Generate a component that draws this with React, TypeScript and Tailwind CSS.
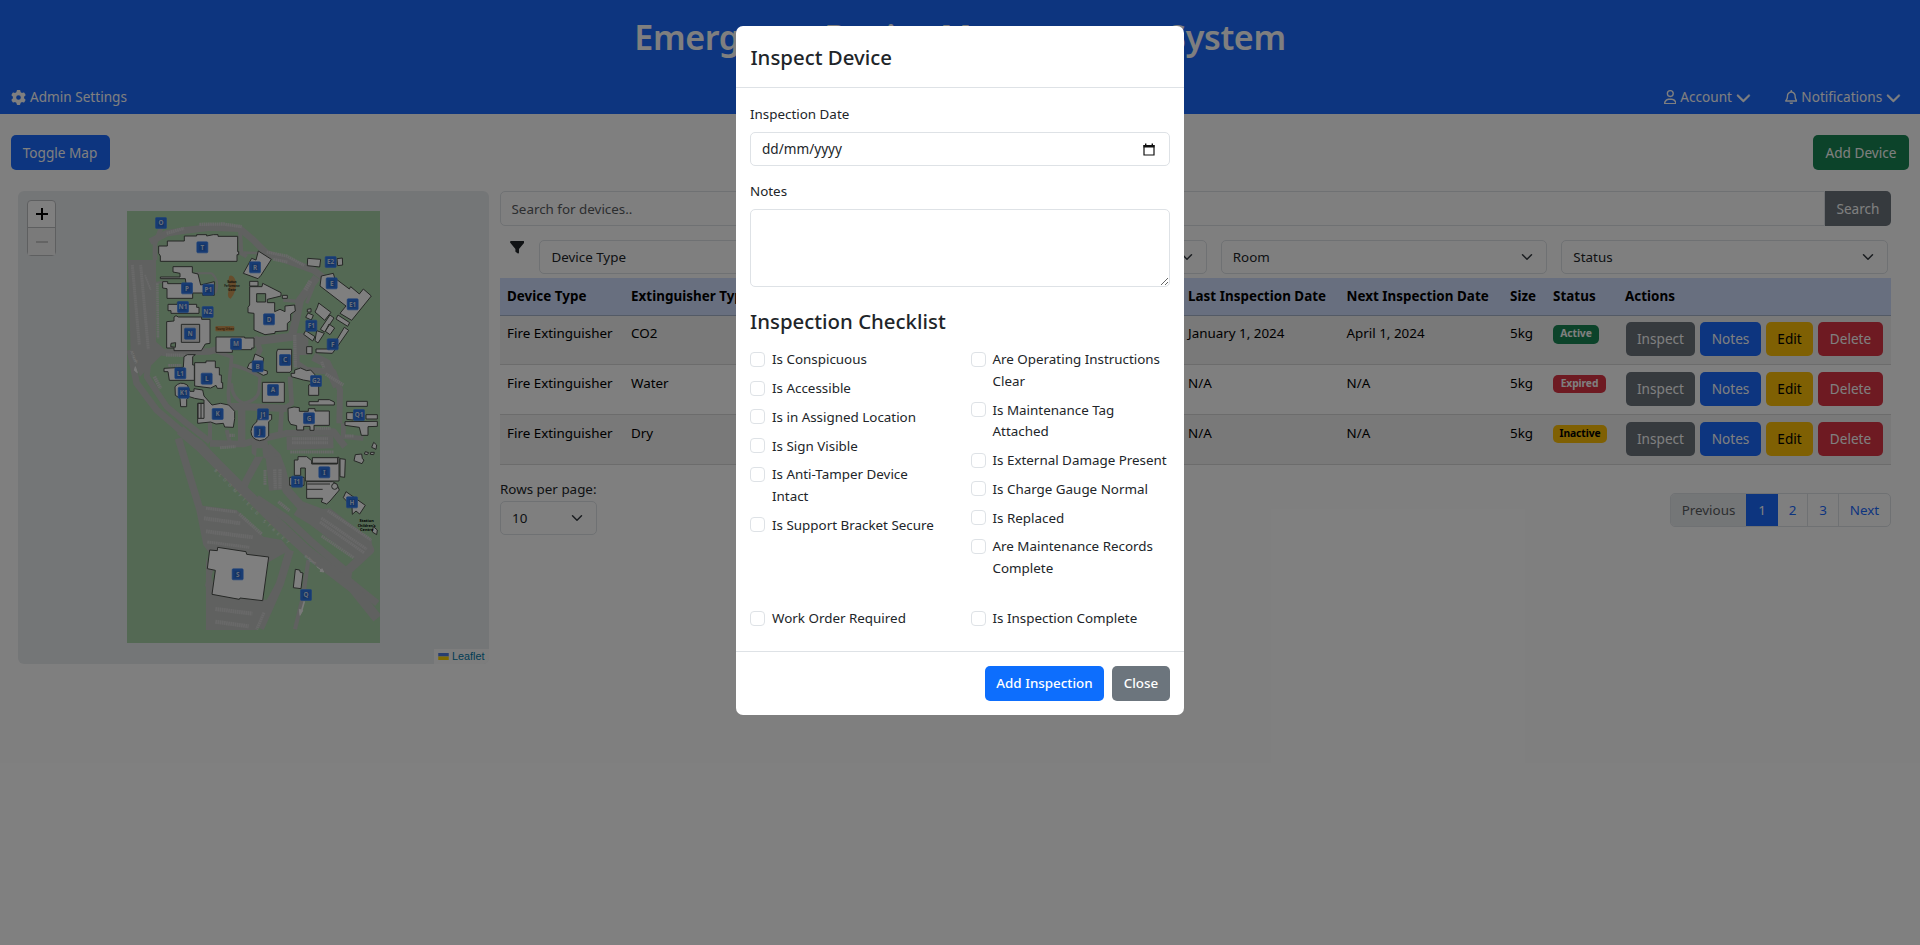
import type { ReactNode } from "react";
import { FaChevronDown, FaFilter, FaGear, FaRegBell, FaRegUser } from "react-icons/fa6";

const FONT = "font-['Noto_Sans',sans-serif]";

const MARKERS: [string, number, number][] = [
  ["O", 183, 99], ["T", 307, 172], ["R", 465, 232], ["E2", 692, 216], ["E", 695, 280],
  ["P", 261, 295], ["P1", 325, 299], ["E1", 758, 343], ["N1", 249, 351], ["N2", 323, 366],
  ["D", 507, 388], ["F1", 634, 407], ["N", 270, 431], ["M", 408, 462], ["F", 698, 463],
  ["C", 555, 510], ["B", 473, 529], ["L1", 241, 550], ["L", 320, 566], ["G2", 648, 573],
  ["A", 519, 600], ["K1", 251, 608], ["K", 353, 672], ["J1", 489, 673], ["G", 627, 685],
  ["Q1", 777, 675], ["J", 479, 725], ["I", 673, 847], ["I1", 591, 875], ["H", 756, 937],
  ["S", 413, 1153], ["Q", 618, 1215],
];

const ROADS: [string, number][] = [
  ["M150 155 L200 130 L250 122 L330 112 L420 116 L460 150 L500 190 L570 215 L640 240 L670 262", 20],
  ["M183 115 L165 160 L165 210", 14],
  ["M158 210 L158 460 L190 488 L330 484 L350 478", 20],
  ["M420 120 L424 190 L440 200", 12],
  ["M430 188 L500 190", 8],
  ["M335 250 Q362 275 345 310 M335 250 L285 250", 6],
  ["M200 275 L150 280 M215 265 L180 265", 6],
  ["M345 484 L395 500 L385 610 L388 650", 11],
  ["M395 525 Q440 535 480 560 L478 590 Q480 630 430 640 Q395 625 394 580", 10],
  ["M465 440 L480 480 L470 500", 16],
  ["M460 455 L540 445 L575 440 L590 380 L600 330 L650 262", 24],
  ["M550 330 L600 335 M640 290 L620 340", 10],
  ["M588 430 L590 520 L620 540 L700 545 L720 600 L718 700", 18],
  ["M640 500 L680 520 L712 590", 26],
  ["M570 560 L575 640 L545 660 L540 740", 14],
  ["M425 640 L425 760 M388 650 L425 650 L560 655", 22],
  ["M330 760 L430 762 L470 750 L560 730 L700 725 L735 770", 20],
  ["M560 760 L700 755", 40],
  ["M480 760 L478 800 L440 870 L425 905", 22],
  ["M500 770 L530 800 L545 840 L560 900 L600 945 L680 975 L740 1010 L810 1080 L745 1140", 26],
  ["M478 780 L520 800", 30],
  ["M520 800 L530 900", 46],
  ["M90 480 L110 580 L170 660 L240 720 L300 760 L400 870 L500 960 L620 1075 L720 1150 L832 1240", 20],
  ["M150 470 L140 560 L200 650 L260 700 L330 755", 18],
  ["M240 720 L300 770 L420 890 L520 990 L650 1110 L760 1195 L832 1285", 30],
  ["M235 745 L300 960 L320 1060 L335 1080", 22],
  ["M470 925 L560 985 L640 1060 L745 1150 L740 1180", 22],
  ["M570 1080 L540 1180 L480 1315", 24],
  ["M625 1110 L610 1215 L585 1318", 12],
  ["M590 960 L640 990 L760 1080 L815 1060", 34],
  ["M730 700 L730 740 L790 745", 14],
  ["M205 690 L240 725", 14],
  ["M330 690 L330 755 M380 720 L390 760 M320 1190 L350 1080", 12],
];

const PAVED = [
  "M84 210 L150 210 L165 470 L190 490 L120 560 L92 490 Z",
  "M290 945 L410 960 L490 1040 L545 1050 L570 1080 L500 1120 L330 1100 Z",
  "M318 1100 L345 1200 L500 1230 L545 1150 L470 1320 L318 1320 Z",
  "M640 960 L690 955 L815 1050 L815 1085 L770 1110 L640 1010 Z",
  "M455 740 Q478 720 500 745 L510 790 Q480 815 455 790 Z",
  "M590 430 L625 430 L625 495 L590 495 Z",
];

const BUILDINGS = [
  "M202 153 L253 153 L253 138 L290 138 L290 134 L320 134 L320 138 L340 134 L354 134 L354 139 L413 139 L413 185 L416 185 L416 194 L411 194 L411 214 L181 214 L181 198 L176 190 L176 168 L202 168 Z",
  "M475 183 L514 208 L483 256 L474 266 L430 250 L455 205 L468 210 Z",
  "M623 205 L662 208 L659 231 L622 227 Z M711 206 L727 204 L728 225 L713 227 Z",
  "M219 230 L277 230 L277 248 L294 252 L302 285 L343 275 L343 316 L308 316 L308 309 L278 309 L278 325 L201 325 L201 296 L188 294 L188 275 L203 275 L203 281 L258 281 L256 266 L181 266 L181 261 L240 261 L240 250 L219 246 Z",
  "M204 343 L232 343 L232 337 L262 337 L262 343 L290 343 L290 352 L297 352 L297 370 L213 370 L213 362 L204 362 Z",
  "M200 395 L222 393 L222 381 L228 377 L235 381 L305 381 L305 388 L330 388 L330 460 L316 462 L304 482 L222 482 L222 474 L200 474 Z",
  "M449 290 L486 290 L488 280 L543 308 L543 318 L502 328 L502 338 L524 338 L524 365 L540 358 L555 365 L555 348 L584 345 L586 363 L572 372 L572 392 L562 400 L562 422 L525 425 L525 430 L495 434 L462 420 L462 370 L444 368 L444 352 L449 345 Z",
  "M449 274 L474 274 L474 288 L449 288 Z M547 316 L562 316 L562 325 L547 325 Z",
  "M664 258 L700 250 L704 264 L748 297 L752 290 L778 312 L790 297 L814 318 L755 391 L720 370 L738 348 L660 288 Z",
  "M656 339 L693 367 L674 391 L645 366 L652 352 Z M690 375 L702 384 L674 426 L661 418 Z M687 402 L704 414 L690 434 L676 424 Z M650 422 L673 430 L654 459 L645 452 Z M617 422 L645 440 L638 453 L611 433 Z M624 369 L640 376 L634 390 L617 382 Z",
  "M714 375 L749 398 L743 409 L708 387 Z M733 412 L746 421 L712 470 L697 490 L648 488 L648 477 L690 477 L710 450 Z M620 470 L636 470 L636 491 L620 491 Z M622 358 L633 356 L633 366 L622 366 Z",
  "M348 441 L434 441 L434 444 L462 444 L462 474 L455 474 L455 479 L397 479 L397 487 L348 487 Z",
  "M533 478 L575 478 L575 541 L570 547 L530 547 L530 486 Z",
  "M465 492 L491 504 L488 520 L484 538 L502 543 L502 552 L490 556 L470 545 L442 534 L448 520 L458 515 Z",
  "M192 535 L250 532 L252 500 L262 494 L286 494 L278 500 L278 525 L283 525 L283 571 L208 571 L204 545 L192 545 Z",
  "M284 518 L318 518 L318 513 L346 513 L346 533 L358 533 L358 555 L364 555 L364 578 L368 578 L368 595 L352 595 L348 586 L332 594 L284 588 Z",
  "M225 590 Q240 572 262 585 L270 604 L282 604 L282 596 L308 600 L312 618 L336 645 L362 640 L386 645 L404 664 L404 686 L400 712 L374 711 L370 700 L348 702 L332 696 L293 700 L293 640 L312 640 L312 630 L284 625 L268 620 L260 628 L260 650 L242 650 L240 625 L226 616 Z",
  "M487 577 L553 577 L553 637 L487 637 Z",
  "M573 550 L584 550 L584 540 L602 534 L620 542 L632 540 L644 553 L650 585 L656 588 L656 616 L626 616 L626 585 L640 580 L632 574 L610 570 L574 560 Z",
  "M627 635 L655 635 L655 629 L688 629 L703 636 L703 645 L627 645 Z",
  "M564 655 L582 651 L598 653 L598 664 L625 664 L625 656 L645 656 L645 663 L688 663 L688 706 L642 706 L642 721 L630 721 L630 709 L611 709 L611 720 L590 720 L590 707 L572 703 L565 690 Z",
  "M475 674 L515 674 L515 688 L506 695 L506 738 Q495 752 479 752 Q454 748 453 725 Q455 705 470 696 Z",
  "M740 634 L802 634 L802 649 L740 649 Z M740 668 L760 668 L760 690 L740 688 Z M798 674 L832 674 L832 687 L798 687 Z M735 695 L832 694 L832 709 L804 710 L804 736 L784 736 L778 712 L735 706 Z",
  "M766 794 L785 792 L787 806 L792 810 L786 821 L762 812 Z M821 757 L830 765 L828 778 L815 772 Z M796 785 L806 788 L802 794 L793 792 Z M812 787 L823 787 L821 794 L811 793 Z",
  "M583 810 L594 810 L594 800 L620 800 L635 812 L635 822 L712 822 L712 802 L717 802 L717 873 L616 873 L616 834 L602 834 L602 856 L583 856 Z",
  "M637 803 L713 803 L713 820 L637 820 Z M720 806 L736 808 L734 862 L720 860 Z M569 862 L612 862 L612 886 L569 886 Z",
  "M620 875 L698 875 L710 882 L718 900 L690 933 L680 942 L664 936 L668 925 L620 925 Z",
  "M738 905 L796 946 L779 972 L768 963 L757 973 L756 950 L730 923 Z M820 1010 L832 1020 L830 1034 L817 1026 Z",
  "M353 1072 L438 1085 L440 1093 L506 1101 L488 1232 L420 1224 L418 1228 L336 1213 L346 1141 L322 1136 L329 1080 L352 1082 Z",
  "M586 1138 L599 1140 L601 1147 L609 1149 L603 1196 L580 1193 Z",
];

const STALLS: [string, number][] = [
  ["M298 103 L370 102 L425 110", 10], ["M200 130 L252 115", 10], ["M500 186 L560 198 L612 226", 9],
  ["M520 208 L562 216", 9], ["M97 225 L118 465", 9], ["M122 225 L145 478", 9], ["M172 280 L174 445", 8],
  ["M135 255 L152 300", 5], ["M616 300 L632 272", 13], ["M584 435 L586 535", 10], ["M198 495 L255 496", 10],
  ["M205 526 L245 526", 8], ["M163 560 L182 596", 11], ["M677 552 L730 585", 10], ["M576 746 L684 746", 9],
  ["M576 758 L684 758", 9], ["M571 786 L702 786", 9], ["M360 773 L407 770", 9], ["M495 840 L495 885", 9],
  ["M524 838 L526 898", 10], ["M540 838 L540 898", 10], ["M535 935 L568 962", 10], ["M632 715 L692 715", 8],
  ["M735 738 L762 738", 9], ["M683 962 L814 1050", 9], ["M664 984 L800 1078", 9], ["M660 996 L792 1088", 9],
  ["M665 1038 L762 1104", 9], ["M318 955 L410 966", 9], ["M312 985 L422 1000", 12], ["M318 1024 L458 1042", 12],
  ["M322 1056 L448 1072", 9], ["M418 972 L486 1033", 10], ["M346 1257 L457 1271", 12], ["M346 1295 L446 1309", 12],
  ["M492 1268 L470 1318", 9], ["M388 736 L404 736", 10], ["M665 515 L672 535", 9],
];

function CampusMap() {
  return (
    <svg viewBox="81 63 759 1296" preserveAspectRatio="none" className="block h-[432px] w-[253px]">
      <rect x="81" y="63" width="759" height="1296" fill="#a8d2a8" />
      <g fill="none" stroke="#c0c2c0" strokeLinejoin="round">
        {ROADS.map(([d, w]) => <path key={d} d={d} strokeWidth={w} />)}
      </g>
      <g fill="#c0c2c0">
        {PAVED.map((d) => <path key={d} d={d} />)}
      </g>
      <path d="M470 775 L487 775 L490 800 L468 800 Z" fill="#a8d2a8" />
      <g fill="none" stroke="#d2d2d2" strokeDasharray="5 1.5">
        {STALLS.map(([d, w]) => <path key={d} d={d} strokeWidth={w} />)}
      </g>
      <g fill="#ffffff" stroke="#4c504c" strokeWidth="3">
        {BUILDINGS.map((d) => <path key={d} d={d} />)}
      </g>
      <g stroke="#4c504c" strokeWidth="3">
        <path d="M244 403 H299 V457 H244 Z" fill="#e4e4e4" />
        <path d="M213 460 L227 458 L226 472 L212 470 Z" fill="#a8d2a8" />
        <path d="M470 311 L497 311 L497 336 L470 336 Z" fill="#a8d2a8" />
        <path d="M294 640 H312 V685 H294 Z M303 640 V685 M620 898 H668 M622 882 L690 882 M637 820 H713" fill="none" />
        <circle cx="704" cy="889" r="9" fill="#ffffff" />
      </g>
      <path d="M388 258 Q400 252 408 275 Q410 305 392 326 Q382 325 384 310 Q390 290 384 275 Z" fill="#cf9a58" />
      <rect x="346" y="408" width="57" height="16" rx="4" fill="#cf9a58" />
      <g fill="#2b2b20" fontSize="10" fontWeight="700" textAnchor="middle" className={FONT}>
        <text x="396" y="280" textLength="28">Sutton</text>
        <text x="396" y="292" textLength="46" lengthAdjust="spacingAndGlyphs">Performance</text>
        <text x="396" y="304">Gate</text>
        <text x="375" y="419" textLength="54" lengthAdjust="spacingAndGlyphs" fill="#6b3d10">Young Urban</text>
        <text x="800" y="997" fill="#000" fontSize="12">Station</text>
        <text x="800" y="1010" fill="#000" fontSize="12" textLength="54" lengthAdjust="spacingAndGlyphs">Children's</text>
        <text x="800" y="1023" fill="#000" fontSize="12">Centre</text>
      </g>
      <g fill="#eeeeee" fontSize="12" className={FONT}>
        <text transform="translate(342 842) rotate(46)" textLength="185">BLOOMFIELD</text>
        <text transform="translate(488 995) rotate(42)" textLength="100">STREET</text>
        <text transform="translate(90 485) rotate(66)" textLength="40">A1 North</text>
        <text transform="translate(613 1100) rotate(38)" textLength="40">to Airport</text>
      </g>
      <g fill="#f4f4f4" stroke="#f4f4f4" strokeWidth="3">
        <path d="M106 530 L112 548 L103 541 Z M650 1130 L665 1141" />
        <path d="M671 1146 L660 1144 L666 1136 Z" />
        <path d="M613 1234 L605 1262" strokeWidth="5" />
        <path d="M600 1276 L598 1258 L608 1262 Z" />
      </g>
      {MARKERS.map(([label, x, y]) => (
        <g key={label}>
          <rect x={x - 16.5} y={y - 16.5} width="33" height="33" rx="3" fill="#2f76e6" stroke="#3f86f2" strokeWidth="2" />
          <rect x={x - 9} y={y - 9} width="18" height="19" fill="#2a68c8" />
          <text x={x} y={y + 7} fontSize="19" fontWeight="700" fill="#cfdcf2" textAnchor="middle" className={FONT}>
            {label}
          </text>
        </g>
      ))}
    </svg>
  );
}

function Chevron() {
  return (
    <svg viewBox="0 0 16 16" className="h-[12px] w-[14px] shrink-0">
      <path d="m2 5 6 6 6-6" fill="none" stroke="#343a40" strokeWidth="2" strokeLinecap="round" strokeLinejoin="round" />
    </svg>
  );
}

function Select({ children, className = "" }: { children?: ReactNode; className?: string }) {
  return (
    <div className={`flex items-center justify-between rounded-[5px] border border-[#dee2e6] bg-white pl-[11px] pr-[12px] ${className}`}>
      <span className="pt-px">{children}</span>
      <Chevron />
    </div>
  );
}

const HEADERS: [string, string][] = [
  ["Device Type", "w-[124px]"],
  ["Extinguisher Type", "w-[557px]"],
  ["Last Inspection Date", "w-[158.5px]"],
  ["Next Inspection Date", "w-[163.5px]"],
  ["Size", "w-[43px]"],
  ["Status", "w-[72px]"],
  ["Actions", "w-[273px]"],
];

const ROWS = [
  { type: "CO2", last: "January 1, 2024", next: "April 1, 2024", status: "Active", badge: "bg-[#198754] text-white w-[46px]", row: "bg-[#f2f2f2]" },
  { type: "Water", last: "N/A", next: "N/A", status: "Expired", badge: "bg-[#dc3545] text-white w-[53px]", row: "bg-white" },
  { type: "Dry", last: "N/A", next: "N/A", status: "Inactive", badge: "bg-[#ffc107] text-black w-[54px]", row: "bg-[#f2f2f2]" },
];

const ACTIONS: [string, string][] = [
  ["Inspect", "w-[69px] bg-[#6c757d] text-white"],
  ["Notes", "w-[61px] bg-[#1a6afe] text-white"],
  ["Edit", "w-[47px] bg-[#ffc107] text-black"],
  ["Delete", "w-[65px] bg-[#dc3545] text-white"],
];

function DeviceTable() {
  return (
    <table className="w-[1391px] table-fixed border-collapse text-black">
      <thead>
        <tr className="h-[37px] border-b border-[#a6b5cc] bg-[#d1deff]">
          {HEADERS.map(([label, width]) => (
            <th key={label} className={`${width} whitespace-nowrap pl-[7px] pt-[2px] text-left font-bold tracking-[0.03px]`}>
              {label}
            </th>
          ))}
        </tr>
      </thead>
      <tbody>
        {ROWS.map((r) => (
          <tr key={r.type} className={`h-[49.8px] border-b border-[#d9d9d9] align-top ${r.row}`}>
            <td className="pl-[7px] pt-[7.5px]">Fire Extinguisher</td>
            <td className="pl-[7px] pt-[7.5px]">{r.type}</td>
            <td className="pl-[7px] pt-[7.5px]">{r.last}</td>
            <td className="pl-[7px] pt-[7.5px]">{r.next}</td>
            <td className="pl-[7px] pt-[7.5px]">5kg</td>
            <td className="pl-[7px] pt-[9.5px]">
              <span className={`flex h-[18.5px] items-center justify-center rounded-[5px] text-[10.3px] font-bold tracking-[-0.1px] ${r.badge}`}>
                {r.status}
              </span>
            </td>
            <td className="pl-[8px] pt-[6.5px]">
              <div className="flex gap-[5px]">
                {ACTIONS.map(([label, cls]) => (
                  <button key={label} className={`h-[34px] rounded-[5px] text-[13.6px] ${cls}`}>{label}</button>
                ))}
              </div>
            </td>
          </tr>
        ))}
      </tbody>
    </table>
  );
}

const LEFT = ["Is Conspicuous", "Is Accessible", "Is in Assigned Location", "Is Sign Visible", "Is Anti-Tamper Device Intact", "Is Support Bracket Secure"];
const RIGHT = ["Are Operating Instructions Clear", "Is Maintenance Tag Attached", "Is External Damage Present", "Is Charge Gauge Normal", "Is Replaced", "Are Maintenance Records Complete"];

function Check({ children }: { children: ReactNode }) {
  return (
    <label className="mb-[7.2px] flex">
      <span className="mr-[7px] mt-[2.4px] h-[15px] w-[15px] shrink-0 rounded-[4px] border border-[#dee2e6]" />
      <span>{children}</span>
    </label>
  );
}

function InspectDialog() {
  return (
    <div className="w-[448px] rounded-[7px] bg-white text-[#212529]">
      <div className="flex h-[62px] items-center border-b border-[#dee2e6] px-[14.4px] pt-[3px]">
        <h5 className="text-[20.4px] font-medium">Inspect Device</h5>
      </div>
      <div className="h-[563px] px-[14px] pt-[16px]">
        <div className="mb-[6.6px]">Inspection Date</div>
        <div className="flex h-[34px] items-center justify-between rounded-[5px] border border-[#dee2e6] pl-[11px] pr-[14px]">
          <span className="text-[13.6px]">dd/mm/yyyy</span>
          <svg viewBox="0 0 12 13" className="h-[13px] w-[12px]">
            <path d="M1 2.5h10v9.5h-10z" fill="none" stroke="#111" strokeWidth="1.2" />
            <path d="M.5 2h11v2.6h-11zM2 .6h1.4v2h-1.4zM8.6 .6h1.4v2h-1.4z" fill="#111" />
          </svg>
        </div>
        <div className="mb-[6.2px] mt-[14.8px]">Notes</div>
        <textarea className="block h-[78px] w-full rounded-[5px] border border-[#dee2e6]" />
        <h5 className="mt-[22px] h-[40.6px] text-[20.4px] font-medium leading-[24px]">Inspection Checklist</h5>
        <div className="grid h-[259px] grid-cols-[220.5px_1fr]">
          <div className="pr-[24px]">{LEFT.map((t) => <Check key={t}>{t}</Check>)}</div>
          <div>{RIGHT.map((t) => <Check key={t}>{t}</Check>)}</div>
        </div>
        <div className="grid grid-cols-[220.5px_1fr]">
          <Check>Work Order Required</Check>
          <Check>Is Inspection Complete</Check>
        </div>
      </div>
      <div className="flex h-[64px] items-center justify-end gap-[8px] border-t border-[#dee2e6] px-[14px] font-medium text-white">
        <button className="h-[35px] w-[119px] rounded-[5px] bg-[#0d6efd] pt-px">Add Inspection</button>
        <button className="h-[35px] w-[58px] rounded-[5px] bg-[#6c757d] pt-px">Close</button>
      </div>
    </div>
  );
}

export default function App() {
  return (
    <div className={`relative h-[945px] w-[1920px] overflow-hidden bg-white text-[13.4px] leading-[21.6px] text-[#212529] ${FONT}`}>
      <header className="flex h-[114px] flex-col justify-between bg-[#1a6afe] text-[13.6px] text-white">
        <h1 className="pt-[16px] text-center text-[34px] font-semibold leading-[43px] tracking-[-0.34px] whitespace-nowrap">Emergency Device Management System</h1>
        <nav className="mb-[6px] flex items-center justify-between pl-[11px] pr-[19px]">
          <a className="flex items-center gap-[4px]"><FaGear className="h-[15px] w-[15px]" />Admin Settings</a>
          <div className="flex gap-[34px]">
            <a className="flex items-center gap-[4px]"><FaRegUser className="h-[14.4px] w-[12.6px]" />Account<FaChevronDown className="h-[14.8px] w-[14.8px] stroke-white stroke-[14px]" /></a>
            <a className="flex items-center gap-[4px]"><FaRegBell className="h-[14.4px] w-[12.6px]" />Notifications<FaChevronDown className="h-[14.8px] w-[14.8px] stroke-white stroke-[14px]" /></a>
          </div>
        </nav>
      </header>

      <div className="mt-[21px] flex justify-between pl-[11px] pr-[11px] text-[13.6px] text-white">
        <button className="h-[35px] w-[99px] rounded-[5px] bg-[#1a6afe] pr-px pt-px">Toggle Map</button>
        <button className="h-[35px] w-[96px] rounded-[5px] bg-[#198754] pt-px">Add Device</button>
      </div>

      <main className="mt-[21px] flex gap-[11px] pl-[18px]">
        <section className="relative h-[473px] w-[471px] overflow-hidden rounded-[6px] bg-[#e9ecef] pl-[109px] pt-[20px]">
          <CampusMap />
          <div className="absolute left-[9px] top-[9px] flex h-[56px] w-[29px] flex-col rounded-[4px] border border-[#bdbfc1] bg-white">
            <div className="flex h-[27px] items-center justify-center border-b border-[#bdbfc1]">
              <svg viewBox="0 0 12 12" className="h-[12px] w-[12px]"><path d="M0 6h12M6 0v12" stroke="#000" strokeWidth="2" /></svg>
            </div>
            <div className="flex flex-1 items-center justify-center bg-[#f4f4f4]">
              <svg viewBox="0 0 12 12" className="h-[12px] w-[12px]"><path d="M0 6h12" stroke="#bbb" strokeWidth="1.6" /></svg>
            </div>
          </div>
          <div className="absolute bottom-0 right-0 flex h-[15px] w-[55px] items-center gap-[3px] bg-[#fafbfb] pl-[4px] font-['Liberation_Sans',Arial,sans-serif] text-[10.8px] text-[#0078a8]">
            <svg viewBox="0 0 12 8" className="h-[7px] w-[11px]"><path fill="#4c7be1" d="M0 0h12v4H0z" /><path fill="#ffd500" d="M0 4h12v4H0z" /></svg>
            Leaflet
          </div>
        </section>

        <section className="w-[1391px]">
          <div className="flex h-[35px]">
            <div className="flex flex-1 items-center rounded-l-[5px] border border-[#dee2e6] pl-[10.5px] pt-[2px] text-[#595c5f]">Search for devices..</div>
            <button className="w-[66px] rounded-r-[5px] bg-[#6c757d] pt-px text-[13.6px] text-white">Search</button>
          </div>
          <div className="mt-[14px] flex h-[34px] pl-[10px]">
            <FaFilter className="mr-[15px] h-[14.4px] w-[14.4px]" />
            <div className="flex flex-1 gap-[14px] pr-[3px]">
              <Select className="flex-1">Device Type</Select>
              <Select className="flex-1" />
              <Select className="flex-1">Room</Select>
              <Select className="flex-1">Status</Select>
            </div>
          </div>
          <div className="mt-[4px]"><DeviceTable /></div>
          <div className="mt-[14.5px] flex items-start justify-between">
            <div className="w-[97px] whitespace-nowrap">
              <div>Rows per page:</div>
              <Select className="h-[34px]">10</Select>
            </div>
            <div className="mt-[13.5px] flex h-[34px] w-[221px] overflow-hidden rounded-[5px] border border-[#dee2e6] text-center leading-[32px] text-[#1a6afe]">
              <span className="w-[75px] bg-[#e9ecef] text-[#595c5f]">Previous</span>
              <span className="w-[32px] bg-[#1a6afe] text-white">1</span>
              <span className="w-[30px] border-r border-[#dee2e6]">2</span>
              <span className="w-[31px] border-r border-[#dee2e6]">3</span>
              <span className="flex-1">Next</span>
            </div>
          </div>
        </section>
      </main>

      <div className="absolute inset-0 flex items-start justify-center bg-black/50 pt-[26px]">
        <InspectDialog />
      </div>
    </div>
  );
}
